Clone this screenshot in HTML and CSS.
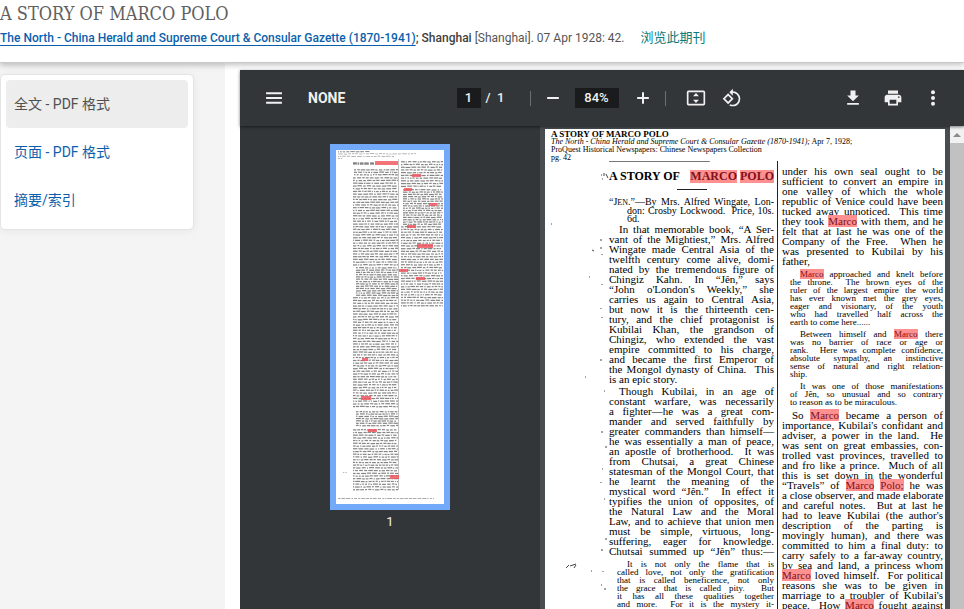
FILE: index.html
```html
<!DOCTYPE html>
<html lang="zh-CN">
<head>
<meta charset="utf-8">
<title>A STORY OF MARCO POLO</title>
<link rel="stylesheet" href="styles.css">
</head>
<body>
<header class="doc-header">
  <h1>A STORY OF MARCO POLO</h1>
  <p class="citation"><a class="source" href="#">The North - China Herald and Supreme Court &amp; Consular Gazette (1870-1941)</a><b>; Shanghai</b> [Shanghai]. 07 Apr 1928: 42.<a class="browse" href="#">浏览此期刊</a></p>
</header>
<main class="content">
  <aside class="side">
    <nav class="formats">
      <a class="current" href="#">全文 - PDF 格式</a>
      <a href="#">页面 - PDF 格式</a>
      <a href="#">摘要/索引</a>
    </nav>
  </aside>
  <section class="viewer">
    <div class="toolbar">
      <div class="group start">
        <button aria-label="Menu"><svg viewBox="0 0 24 24"><path d="M2.500 5h19v2.400h-19zM2.500 10.800h19v2.400h-19zM2.500 16.600h19V19h-19z"/></svg></button>
        <span class="name">NONE</span>
      </div>
      <div class="group">
        <input class="page-no" aria-label="Page" value="1"><span class="total">/&nbsp; 1</span>
        <span class="sep"></span>
        <button aria-label="Zoom out"><svg viewBox="0 0 24 24"><path d="M5 10.800h14v2.400H5z"/></svg></button>
        <input class="zoom" aria-label="Zoom" value="84%">
        <button class="plus" aria-label="Zoom in"><svg viewBox="0 0 24 24"><path d="M19 13.200h-5.800V19h-2.400v-5.800H5v-2.400h5.800V5h2.400v5.800H19z"/></svg></button>
        <span class="sep after"></span>
        <button aria-label="Fit to page"><svg viewBox="0 0 24 24"><path fill-rule="evenodd" d="M3 3h18a2 2 0 0 1 2 2v14a2 2 0 0 1-2 2H3a2 2 0 0 1-2-2V5a2 2 0 0 1 2-2zm0 2v14h18V5zM12 6l3.500 4h-7zM12 18l-3.500-4h7z"/></svg></button>
        <button class="rotate" aria-label="Rotate"><svg viewBox="0 0 24 24"><path d="M7.340 6.410L.860 12.900l6.490 6.480 6.490-6.480-6.500-6.490zM3.690 12.900l3.660-3.660L11 12.900l-3.660 3.660-3.650-3.660zm15.670-6.260A8.950 8.950 0 0 0 13 4V.760L8.760 5 13 9.240V6c1.790 0 3.580.680 4.950 2.050a7.007 7.007 0 0 1 0 9.900 6.973 6.973 0 0 1-7.790 1.440l-1.490 1.490C10.020 21.620 11.510 22 13 22c2.300 0 4.610-.880 6.360-2.640a8.980 8.980 0 0 0 0-12.720z"/></svg></button>
      </div>
      <div class="group end">
        <button aria-label="Download"><svg viewBox="0 0 24 24"><path d="M5 20h14v-2H5v2zM19 9h-4V3H9v6H5l7 7 7-7z"/></svg></button>
        <button aria-label="Print"><svg viewBox="0 0 24 24"><path d="M19 8H5c-1.660 0-3 1.340-3 3v6h4v4h12v-4h4v-6c0-1.660-1.340-3-3-3zm-3 11H8v-5h8v5zm3-7c-.550 0-1-.450-1-1s.450-1 1-1 1 .450 1 1-.450 1-1 1zm-1-9H6v4h12V3z"/></svg></button>
        <button aria-label="More"><svg viewBox="0 0 24 24"><circle cx="12" cy="5" r="2.400"/><circle cx="12" cy="12" r="2.400"/><circle cx="12" cy="19" r="2.400"/></svg></button>
      </div>
    </div>
    <div class="panes">
      <div class="thumbs">
        <svg class="thumb" id="thumb" viewBox="0 0 108 354" aria-hidden="true"></svg>
        <span class="thumb-no">1</span>
      </div>
      <div class="canvas">
        <article class="page">
          <header class="page-head">
            <b>A STORY OF MARCO POLO</b>
            <div><i>The North - China Herald and Supreme Court &amp; Consular Gazette (1870-1941);</i> Apr 7, 1928;</div>
            <div>ProQuest Historical Newspapers: Chinese Newspapers Collection</div>
            <div>pg. 42</div>
          </header>
          <svg class="specks" viewBox="0 0 64 480" aria-hidden="true"><path d="M56 46h1M59 44v3M61 45l2 4M57 50h1M6 95h1M47 121l2 1M56 110v2M56 118v2M57 125v1M44 148h1M57 155v1M56 179v1M57 188v1M40 248h1M56 230v2M59 262h1M57 302v2M60 318h2M57 340h1M56 353v1M59 370h1M21 439l3-3M25 437l6-2M29 439l2-3M46 442h1M57 420v2M60 410h2M58 442v1M56 456h1M59 460h2"/></svg>
          <div class="col left">
            <h2>A STORY OF <span><mark>MARCO</mark> <mark>POLO</mark></span></h2>
            <hr>
            <p class="notice"><span>“J<small>EN</small>.”—By Mrs. Alfred Wingate, Lon-</span><span class="in">don: Crosby Lockwood.&nbsp; Price, 10s.</span><span class="in last">6d.</span></p>
            <p><span class="first">In that memorable book, “A Ser-</span><span>vant of the Mightiest,” Mrs. Alfred</span><span>Wingate made Central Asia of the</span><span>twelfth century come alive, domi-</span><span>nated by the tremendous figure of</span><span>Chingiz Kahn. In “Jên,” says</span><span>“John o'London's Weekly,” she</span><span>carries us again to Central Asia,</span><span>but now it is the thirteenth cen-</span><span>tury, and the chief protagonist is</span><span>Kubilai Khan, the grandson of</span><span>Chingiz, who extended the vast</span><span>empire committed to his charge,</span><span>and became the first Emperor of</span><span>the Mongol dynasty of China.&nbsp; This</span><span class="last">is an epic story.</span></p>
            <p><span class="first">Though Kubilai, in an age of</span><span>constant warfare, was necessarily</span><span>a fighter—he was a great com-</span><span>mander and served faithfully by</span><span>greater commanders than himself—</span><span>he was essentially a man of peace,</span><span>an apostle of brotherhood.&nbsp; It was</span><span>from Chutsai, a great Chinese</span><span>statesman of the Mongol Court, that</span><span>he learnt the meaning of the</span><span>mystical word “Jên.”&nbsp; In effect it</span><span>typifies the union of opposites, of</span><span>the Natural Law and the Moral</span><span>Law, and to achieve that union men</span><span>must be simple, virtuous, long-</span><span>suffering, eager for knowledge.</span><span>Chutsai summed up “Jên” thus:—</span></p>
            <p class="quote"><span class="first">It is not only the flame that is</span><span>called love, not only the gratification</span><span>that is called beneficence, not only</span><span>the grace that is called pity.&nbsp; But</span><span>it has all these qualities together</span><span>and more.&nbsp; For it is the mystery it-</span></p>
          </div>
          <div class="col right">
            <p><span>under his own seal ought to be</span><span>sufficient to convert an empire in</span><span>one valley of which the whole</span><span>republic of Venice could have been</span><span>tucked away unnoticed.&nbsp; This time</span><span>they took <mark>Marco</mark> with them, and he</span><span>felt that at last he was one of the</span><span>Company of the Free.&nbsp; When he</span><span>was presented to Kubilai by his</span><span class="last">father,</span></p>
            <p class="quote"><span class="first"><mark>Marco</mark> approached and knelt before</span><span>the throne.&nbsp; The brown eyes of the</span><span>ruler of the largest empire the world</span><span>has ever known met the grey eyes,</span><span>eager and visionary, of the youth</span><span>who had travelled half across the</span><span class="last">earth to come here......</span></p>
            <p class="quote next"><span class="first">Between himself and <mark>Marco</mark> there</span><span>was no barrier of race or age or</span><span>rank.&nbsp; Here was complete confidence,</span><span>absolute sympathy, an instinctive</span><span>sense of natural and right relation-</span><span class="last">ship.</span></p>
            <p class="quote"><span class="first">It was one of those manifestations</span><span>of Jên, so unusual and so contrary</span><span class="last">to reason as to be miraculous.</span></p>
            <p><span class="first">So <mark>Marco</mark> became a person of</span><span>importance, Kubilai's confidant and</span><span>adviser, a power in the land.&nbsp; He</span><span>was sent on great embassies, con-</span><span>trolled vast provinces, travelled to</span><span>and fro like a prince.&nbsp; Much of all</span><span>this is set down in the wonderful</span><span>“Travels” of <mark>Marco</mark> <mark>Polo;</mark> he was</span><span>a close observer, and made elaborate</span><span>and careful notes.&nbsp; But at last he</span><span>had to leave Kubilai (the author's</span><span>description of the parting is</span><span>movingly human), and there was</span><span>committed to him a final duty: to</span><span>carry safely to a far-away country,</span><span>by sea and land, a princess whom</span><span><mark>Marco</mark> loved himself.&nbsp; For political</span><span>reasons she was to be given in</span><span>marriage to a troubler of Kubilai's</span><span>peace.&nbsp; How <mark>Marco</mark> fought against</span></p>
          </div>
        </article>
        <div class="scrollbar" aria-hidden="true"><svg viewBox="0 0 14 17"><path d="M3 11l4-4 4 4z"/></svg></div>
      </div>
    </div>
  </section>
</main>
<script src="thumb.js"></script>
</body>
</html>
```
FILE: styles.css
```css
* { box-sizing: border-box; }
body {
  margin: 0;
  height: 100vh;
  display: flex;
  flex-direction: column;
  overflow: hidden;
  background: #fff;
  color: #555;
  font: 12px/20px Roboto, "Noto Sans CJK SC", sans-serif;
}
h1, h2, p { margin: 0; font-weight: 400; }
a { color: #0b5fad; text-decoration: none; }

.doc-header {
  position: relative;
  z-index: 1;
  height: 63px;
  flex: none;
  border-bottom: 1px solid #c8cac9;
  box-shadow: 0 2px 6px rgba(0, 0, 0, .25);
  background: #fff;
}
h1 {
  font: 18px/28px "DejaVu Serif Condensed", "DejaVu Serif", serif;
  color: #606060;
}
.citation { white-space: nowrap; }
.source { font-weight: 500; text-decoration: underline; text-underline-offset: 3px; text-decoration-thickness: 1px; }
.citation b { font-weight: 500; color: #404040; }
.browse { margin-left: 16px; font-size: 13px; color: #0c7a78; }

.content { flex: 1; min-height: 0; display: flex; }
.side { flex: none; width: 225px; padding: 11px 31px 0 0; background: #f4f4f4; }
.formats {
  padding: 5px;
  border: 1px solid #e4e4e4;
  border-radius: 5px;
  background: #fff;
  box-shadow: 0 1px 8px rgba(0, 0, 0, .06);
}
.formats a { display: block; padding: 0 8px; border-radius: 4px; font-size: 14px; line-height: 48px; }
.formats .current { background: #ededed; color: #505050; }

.viewer {
  flex: 1;
  min-width: 0;
  margin: 7px 0 0 15px;
  display: flex;
  flex-direction: column;
  background: #323639;
  color: #f1f1f1;
}
.toolbar {
  position: relative;
  flex: none;
  display: grid;
  grid-template-columns: 1fr auto 1fr;
  align-items: center;
  height: 56px;
  box-shadow: 0 1px 3px rgba(0, 0, 0, .5);
}
.group { display: flex; align-items: center; }
.start { padding-left: 18px; gap: 18px; }
.end { justify-content: flex-end; gap: 8px; padding-right: 15px; }
.name { font-size: 14px; font-weight: 700; }
button {
  width: 32px;
  height: 32px;
  padding: 6px;
  border: 0;
  background: none;
}
button svg { display: block; width: 20px; height: 20px; fill: #f1f1f1; }
input {
  height: 20px;
  padding: 0;
  border: 0;
  background: #191b1c;
  color: #f1f1f1;
  text-align: center;
  font: 500 13px/20px Roboto, sans-serif;
}
.page-no { width: 24px; }
.zoom { width: 44px; margin: 0 8px 0 6px; }
.total { width: 48px; padding-left: 5px; font-size: 13px; font-weight: 500; }
.sep { width: 1px; height: 15px; margin: 0 6px 0 1px; background: #6d7073; }
.after { margin: 0 14px 0 6px; }
.rotate { margin-left: 4px; }

.panes { flex: 1; min-height: 0; display: flex; }
.thumbs { flex: none; width: 300px; padding-top: 18px; display: flex; flex-direction: column; align-items: center; }
.thumb { width: 120px; height: 366px; flex: none; border: 6px solid #72a9f8; background: #fff; }
.thumb-no { font-size: 13px; line-height: 24px; }
.thumb .ink { fill: #333; opacity: .6; }
.thumb .hit { fill: #f0505a; opacity: .8; }

.canvas { flex: 1; min-width: 0; display: flex; gap: 5px; padding-left: 5px; background: #484d51; overflow: hidden; }
.scrollbar { flex: none; width: 14px; background: #c1c1c1; }
.scrollbar svg { display: block; width: 14px; height: 17px; background: #f1f1f1; fill: #8a8a8a; }

.page {
  position: relative;
  flex: 1;
  min-width: 0;
  margin-top: 3px;
  display: grid;
  grid-template-rows: 32px auto;
  grid-template-columns: 64px minmax(0, 169fr) minmax(0, 167fr);
  background: #fff;
  color: #000;
  font: 11px/10px "Liberation Serif", serif;
}
.page-head { grid-column: 1 / -1; padding: 1px 0 0 6px; font-size: 8px; line-height: 8px; white-space: nowrap; }
.page-head b { display: block; font-size: 9px; }
.specks { width: 64px; height: 480px; margin-top: -32px; fill: none; stroke: #444; stroke-width: 1; }
.left {
  padding-right: 3px;
  border-right: 1px solid #222;
  background: linear-gradient(#777, #777) no-repeat 0 0 / 60% 1px;
}
.right { padding: 5px 2px 0 4px; }
h2 {
  display: flex;
  justify-content: space-between;
  align-items: center;
  height: 28px;
  padding-top: 2px;
  font-size: 12px;
  font-weight: 700;
  line-height: 13px;
  white-space: nowrap;
}
mark { background: #ff9090; color: #80101a; }
h2 mark { display: inline-block; }
hr { width: 30px; height: 1px; margin: 0 auto 8px; border: 0; background: #222; }
.col p { margin-bottom: 2px; }
.col p > span { display: block; white-space: nowrap; text-align: justify; text-align-last: justify; }
.col p > .last { text-align-last: left; }
.col p > .first { padding-left: 10px; }
.col .notice { margin-bottom: 1px; line-height: 8px; font-size: 10px; }
.notice .in { padding-left: 18px; }
.notice small { font-size: 8px; }
.col .quote { padding-left: 8px; margin: 4px 0; font-size: 9px; line-height: 8px; }
.col .next { margin-top: 0; }
```
FILE: thumb.js
```js
// Draws the miniature page: rows of words in two columns, then the search hits.
const svg = document.getElementById('thumb');
let seed = 7;
const rand = () => (seed = (seed * 16807) % 2147483647) / 2147483647;
const box = (x, y, w, h, cls) => {
  const r = document.createElementNS('http://www.w3.org/2000/svg', 'rect');
  r.setAttribute('x', x);
  r.setAttribute('y', y);
  r.setAttribute('width', w);
  r.setAttribute('height', h);
  r.setAttribute('class', cls);
  svg.appendChild(r);
};
const row = (x, end, y, h) => {
  while (x < end - 1) {
    const w = Math.min(1 + rand() * 4, end - x);
    box(x, y + rand() * 0.4, w, h, 'ink');
    x += w + 0.7 + rand() * 0.6;
  }
};
const column = (x, end, from, to, pitch) => {
  for (let y = from; y < to; y += pitch) row(x, end, y, 1.2);
};
row(2, 34, 1, 1);
row(2, 80, 3.4, 0.6);
row(2, 58, 5.8, 0.6);
row(2, 8, 8, 0.6);
row(17, 38, 12, 2.4);
column(18, 62, 19, 25, 2.5);
column(17, 62, 27, 115, 2.72);
column(20, 62, 117, 145, 2.3);
column(17, 62, 147, 258, 2.72);
column(20, 62, 261, 277, 2.3);
column(17, 62, 279, 340, 2.72);
column(65, 107, 11, 36, 2.72);
column(67, 107, 39, 74, 2.3);
column(65, 107, 76, 157, 2.72);
box(62.5, 9, 0.5, 331, 'ink');
row(2, 98, 348, 0.7);
row(7, 12, 322, 0.6);
[[39, 11, 23, 4], [76, 24, 9, 3], [68, 38, 8, 3], [93, 53, 8, 3], [71, 75, 9, 3],
 [81, 94, 16, 4], [63, 119, 9, 3], [80, 127, 9, 3], [26, 208, 6, 3], [25, 246, 10, 4],
 [32, 279, 9, 3], [54, 325, 9, 4]].forEach(([x, y, w, h]) => box(x, y, w, h, 'hit'));
```
